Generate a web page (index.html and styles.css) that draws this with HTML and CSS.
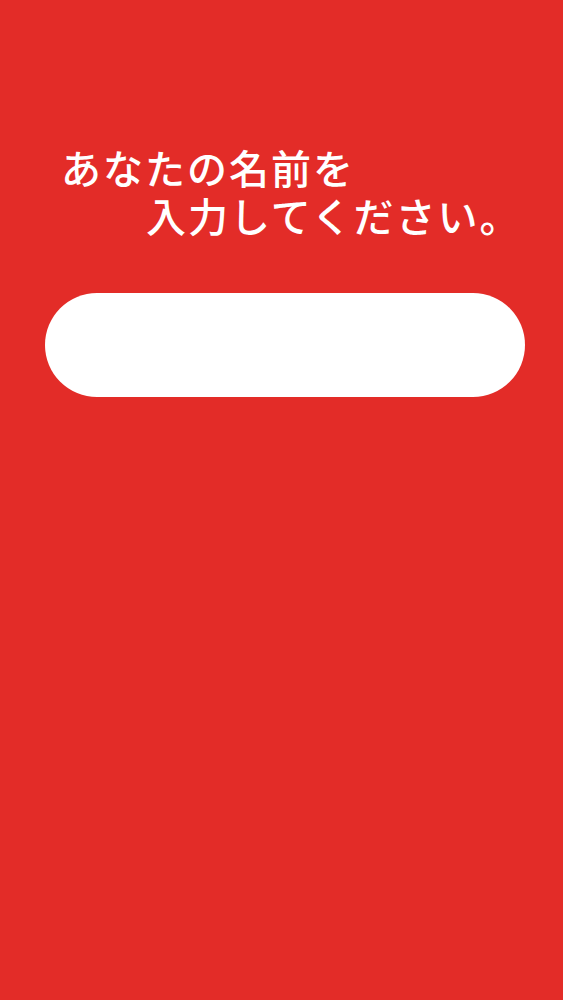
FILE: index.html
```html
<!DOCTYPE html>
<html lang="ja">
<head>
<meta charset="utf-8">
<title>名前入力</title>
<link rel="stylesheet" href="styles.css">
</head>
<body>
<main class="screen">
  <h1 class="prompt">
    <span class="line line-1">あなたの名前を</span>
    <span class="line line-2">入力してください。</span>
  </h1>
  <div class="field">
    <input class="name-input" type="text" aria-label="名前">
  </div>
</main>
</body>
</html>
```

FILE: styles.css
```css
html, body {
  margin: 0;
  padding: 0;
  background: #e32c28;
}

.screen {
  min-height: 1000px;
  box-sizing: border-box;
  padding: 143px 0 0 0;
  display: flex;
  flex-direction: column;
  font-family: "Noto Sans CJK JP", "Noto Sans", sans-serif;
}

.prompt {
  margin: 0;
  color: #ffffff;
  font-size: 40px;
  font-weight: 500;
  line-height: 48px;
  letter-spacing: 2px;
}

.line {
  display: block;
  white-space: nowrap;
}

.line-1 {
  padding-left: 61px;
}

.line-2 {
  padding-left: 146px;
}

.field {
  margin: 54px 38px 0 45px;
}

.name-input {
  display: block;
  width: 100%;
  box-sizing: border-box;
  height: 104px;
  border: none;
  border-radius: 52px;
  background: #ffffff;
  outline: none;
  padding: 0 40px;
  font-family: inherit;
  font-size: 28px;
}
```
